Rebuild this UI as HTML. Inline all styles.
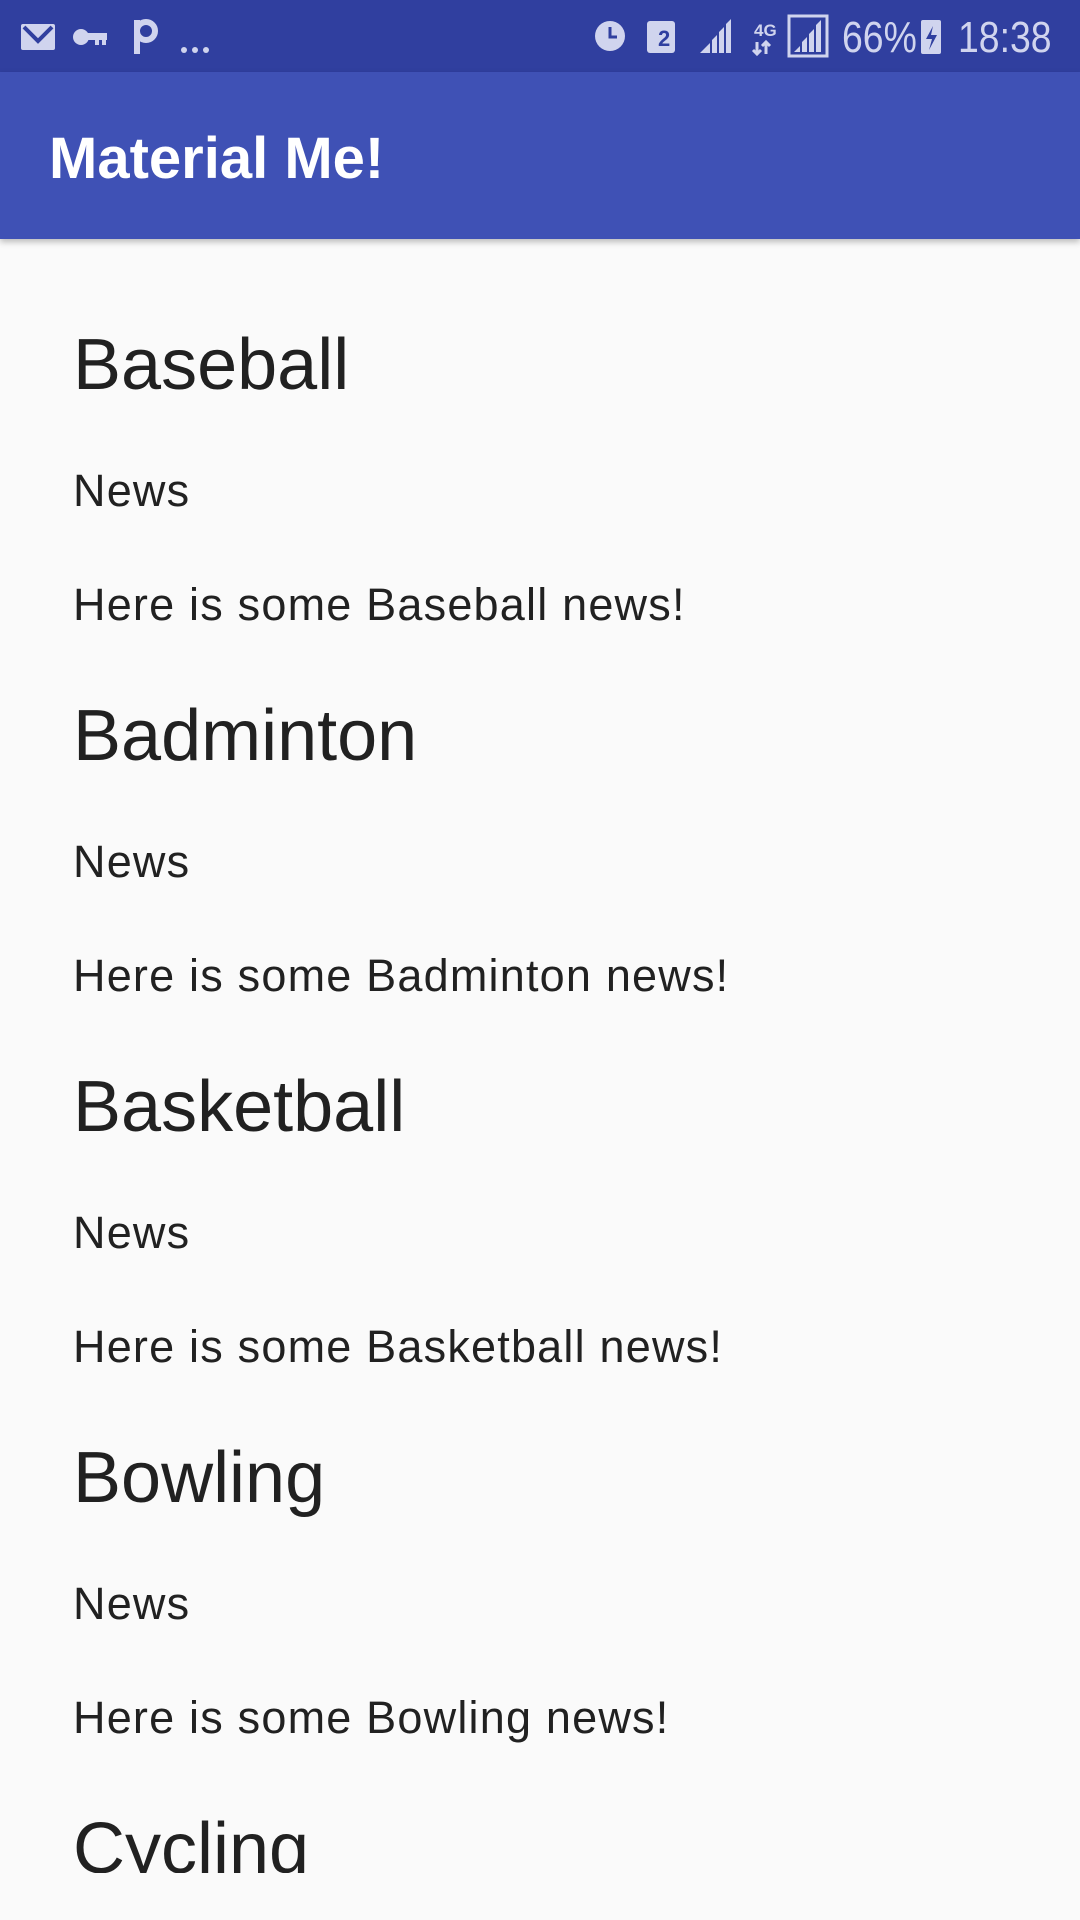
<!DOCTYPE html>
<html><head><style>
html,body{margin:0;padding:0;}
body{width:1080px;height:1920px;background:#fafafa;position:relative;overflow:hidden;font-family:"Liberation Sans",sans-serif;}
#sb{position:absolute;left:0;top:0;width:1080px;height:72px;background:#303f9f;color:#d0d4ee;}
#ab{position:absolute;left:0;top:72px;width:1080px;height:167px;background:#3f51b5;box-shadow:0 3px 6px rgba(0,0,0,0.25);z-index:2;}
#ab .t{position:absolute;left:49px;font-size:58px;font-weight:bold;color:#fff;line-height:1;}
#list{position:absolute;left:0;top:244px;width:1080px;height:1629px;overflow:hidden;}
.h,.n,.d{position:absolute;left:73px;color:#212121;line-height:1;white-space:nowrap;}
.h{font-size:72px;}
.n,.d{font-size:45px;letter-spacing:1.2px;margin-top:-5px;}
.s{position:absolute;font-size:44px;line-height:1;color:#d0d4ee;transform-origin:0 0;transform:scaleX(0.85);}
</style></head><body>
<div id="sb">
<svg width="1080" height="72" style="position:absolute;left:0;top:0">
<g fill="#d0d4ee">
<rect x="21" y="24" width="34" height="26" rx="2"/>
<path d="M24 27 L38 41 L52 27" stroke="#303f9f" stroke-width="4" fill="none"/>
<circle cx="81" cy="37" r="8"/>
<rect x="85" y="33" width="22" height="7"/>
<rect x="95" y="38" width="4" height="7"/><rect x="102" y="38" width="4" height="7"/>
<rect x="134" y="20" width="6" height="34"/>
<circle cx="146" cy="31" r="9" fill="none" stroke="#d0d4ee" stroke-width="6"/>
<circle cx="184" cy="50" r="3"/><circle cx="195" cy="50" r="3"/><circle cx="206" cy="50" r="3"/>
<circle cx="610" cy="36" r="15"/>
<path d="M610 27 V37 H617" stroke="#303f9f" stroke-width="3" fill="none"/>
<rect x="647" y="21" width="28" height="32" rx="3"/>
<path d="M700 53 L710 43 V53Z M712 53 V40 L717 35 V53Z M719 53 V32 L724 27 V53Z M726 53 V24 L731 19 V53Z"/>
<text x="754" y="36" font-size="17" font-weight="bold" font-family="Liberation Sans">4G</text>
<path d="M757 42 V54 M753 50 L757 54 L761 50 M766 54 V42 M762 46 L766 42 L770 46" stroke="#d0d4ee" stroke-width="3" fill="none"/>
<rect x="789" y="16" width="38" height="40" fill="none" stroke="#d0d4ee" stroke-width="3"/>
<path d="M794 52 L800 46 V52Z M802 52 V42 L807 37 V52Z M809 52 V34 L814 29 V52Z M816 52 V25 L821 20 V52Z"/>
<rect x="921" y="20" width="20" height="34" rx="2"/>
<path d="M933 26 L926 39 L932 39 L929 50 L937 35 L931 35Z" fill="#303f9f"/>
</g>
<text x="658" y="46" font-size="22" font-weight="bold" fill="#303f9f" font-family="Liberation Sans">2</text>
</svg>
<div class="s" style="left:842px;top:16px;">66%</div>
<div class="s" style="left:958px;top:16px;">18:38</div>
</div>
<div id="ab"><div class="t" style="top:58px">Material Me!</div></div>
<div id="list">
<div class="h" style="top:85px">Baseball</div>
<div class="n" style="top:229px">News</div>
<div class="d" style="top:343px">Here is some Baseball news!</div>

<div class="h" style="top:456px">Badminton</div>
<div class="n" style="top:600px">News</div>
<div class="d" style="top:714px">Here is some Badminton news!</div>

<div class="h" style="top:827px">Basketball</div>
<div class="n" style="top:971px">News</div>
<div class="d" style="top:1085px">Here is some Basketball news!</div>

<div class="h" style="top:1198px">Bowling</div>
<div class="n" style="top:1342px">News</div>
<div class="d" style="top:1456px">Here is some Bowling news!</div>

<div class="h" style="top:1569px">Cycling</div>
</div>
</body></html>
